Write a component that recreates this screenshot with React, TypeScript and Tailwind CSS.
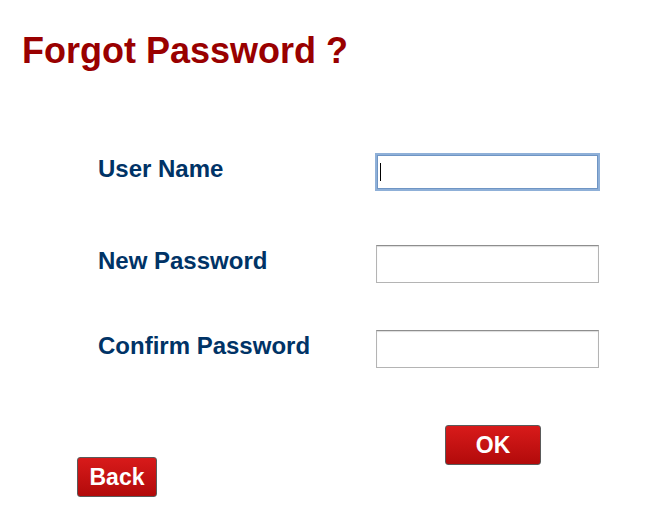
export default function App() {
  return (
    <div className="min-h-[512px] bg-white font-['Liberation_Sans',Arial,sans-serif]">
      {/* Title */}
      <h1 className="pl-[22px] pt-[33px] text-[36px] font-bold leading-none text-[#990000]">
        Forgot Password ?
      </h1>

      {/* Form rows */}
      <div className="mt-[84px] pl-[98px]">
        <div className="flex items-start">
          <label className="mt-[4px] w-[277px] text-[24px] font-bold leading-none text-[#003366]">
            User Name
          </label>
          <div className="relative">
            <input
              type="text"
              className="h-[38px] w-[225px] border-2 border-[#8fb0d8] bg-white px-1 shadow-[inset_0_0_0_1px_#6f95c4] outline-none"
            />
            <span className="absolute left-[5px] top-[10px] h-[18px] w-px bg-black" />
          </div>
        </div>

        <div className="mt-[54px] flex items-start">
          <label className="mt-[4px] w-[278px] text-[24px] font-bold leading-none text-[#003366]">
            New Password
          </label>
          <input
            type="password"
            className="h-[38px] w-[223px] border border-[#b4b4b4] border-t-[#8e8e8e] bg-white px-1 shadow-[inset_0_1px_1px_#dcdcdc] outline-none"
          />
        </div>

        <div className="mt-[47px] flex items-start">
          <label className="mt-[4px] w-[278px] text-[24px] font-bold leading-none text-[#003366]">
            Confirm Password
          </label>
          <input
            type="password"
            className="h-[38px] w-[223px] border border-[#b4b4b4] border-t-[#8e8e8e] bg-white px-1 shadow-[inset_0_1px_1px_#dcdcdc] outline-none"
          />
        </div>
      </div>

      {/* Buttons */}
      <div className="mt-[57px] flex items-start pl-[77px]">
        <button className="mt-[32px] h-[40px] w-[80px] rounded-[3px] border border-[#5a5a5a] bg-gradient-to-b from-[#d81a1a] to-[#b20a0a] text-[23px] font-bold leading-none text-white">
          Back
        </button>
        <button className="ml-[288px] h-[40px] w-[96px] rounded-[3px] border border-[#5a5a5a] bg-gradient-to-b from-[#d81a1a] to-[#b20a0a] text-[23px] font-bold leading-none text-white">
          OK
        </button>
      </div>
    </div>
  );
}
